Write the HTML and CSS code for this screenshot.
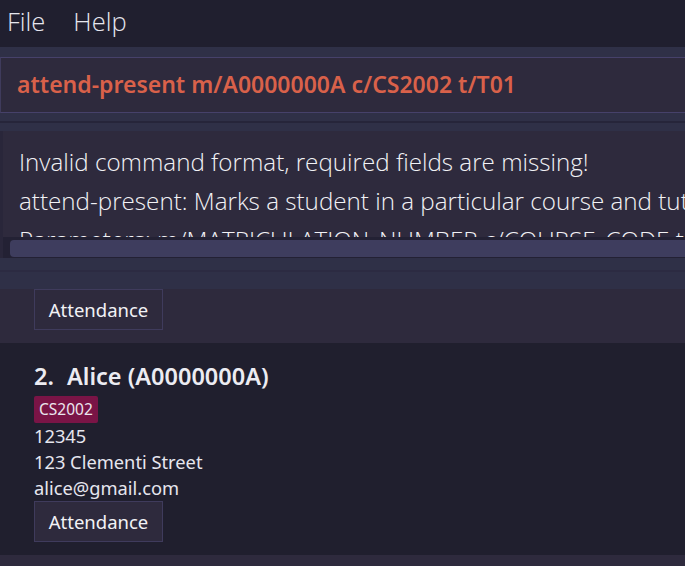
FILE: index.html
```html
<!DOCTYPE html>
<html>
<head>
<meta charset="utf-8">
<link rel="stylesheet" href="styles.css">
</head>
<body>
<div class="app">
  <div class="menubar">
    <span class="menu-item">File</span>
    <span class="menu-item">Help</span>
  </div>
  <div class="strip"></div>
  <div class="command-box">
    <div class="command-text">attend-present m/A0000000A c/CS2002 t/T01</div>
  </div>
  <div class="strip split"></div>
  <div class="result">
    <div class="result-text">
      <div class="line">Invalid command format, required fields are missing!</div>
      <div class="line">attend-present: Marks a student in a particular course and tutorial as present</div>
      <div class="line">Parameters: m/MATRICULATION_NUMBER c/COURSE_CODE t/TUTORIAL</div>
    </div>
    <div class="hscroll"><div class="thumb"></div></div>
  </div>
  <div class="strip list-top"></div>
  <div class="list">
    <div class="card card-alt partial">
      <div class="btn">Attendance</div>
    </div>
    <div class="card">
      <div class="name"><span class="index">2.</span>Alice (A0000000A)</div>
      <div class="tags"><span class="tag">CS2002</span></div>
      <div class="field">12345</div>
      <div class="field">123 Clementi Street</div>
      <div class="field">alice@gmail.com</div>
      <div class="btn">Attendance</div>
    </div>
    <div class="card card-alt rest"></div>
  </div>
</div>
</body>
</html>
```
FILE: styles.css
```css
html, body {
  margin: 0;
  padding: 0;
  background: #2e2a3d;
}
.app {
  width: 685px;
  height: 566px;
  overflow: hidden;
  display: flex;
  flex-direction: column;
  font-family: "Open Sans", "Noto Sans", sans-serif;
}
.menubar {
  height: 47px;
  background: #201f2f;
  display: flex;
  align-items: center;
  padding-left: 7px;
  gap: 28px;
  flex-shrink: 0;
}
.menu-item {
  color: #e6e6ee;
  font-size: 25.5px;
  font-weight: 300;
  line-height: 1;
  margin-top: -4px;
}
.strip {
  height: 10px;
  background: #2f3047;
  flex-shrink: 0;
}
.strip.split {
  height: 18px;
  background: linear-gradient(#2f3047 0 8px, #26253a 8px 10px, #2f3047 10px 18px);
}
.command-box {
  height: 54px;
  background: #2e2a3d;
  border-top: 1px solid #46416a;
  border-bottom: 1px solid #46416a;
  border-left: 1px solid #3f3b5c;
  display: flex;
  align-items: center;
  padding-left: 16px;
  flex-shrink: 0;
}
.command-text {
  color: #d9614a;
  font-size: 23px;
  font-weight: 600;
  font-family: "Noto Sans", "Open Sans", sans-serif;
  margin-top: -2px;
  white-space: nowrap;
}
.result {
  height: 127px;
  background: #2e2a3d;
  position: relative;
  overflow: hidden;
  flex-shrink: 0;
  border-left: 3px solid #29263a;
}
.result-text {
  padding: 11px 0 0 16px;
  color: #f2f2f6;
  font-size: 24.2px;
  font-weight: 300;
  white-space: nowrap;
}
.line {
  height: 39px;
  line-height: 39px;
}
.hscroll {
  position: absolute;
  left: 0;
  right: 0;
  top: 106px;
  height: 21px;
  background: #232134;
  padding: 3px 0 0 7px;
  box-sizing: border-box;
}
.thumb {
  height: 17px;
  background: #3e3d5e;
  border-radius: 4px 0 0 4px;
}
.strip.list-top {
  height: 32px;
  background: linear-gradient(#2f3047 0 12px, #2c2b42 12px 14px, #2f3047 14px 32px);
}
.list {
  flex: 1;
  display: flex;
  flex-direction: column;
  font-family: "Noto Sans", "Open Sans", sans-serif;
}
.card {
  background: #201f2e;
  padding: 18px 0 13px 34px;
  display: flex;
  flex-direction: column;
  align-items: flex-start;
}
.card-alt {
  background: #2e2a3d;
}
.card.partial {
  padding: 0 0 13px 34px;
  height: 54px;
  box-sizing: border-box;
  margin-top: -1px;
}
.card.rest {
  flex: 1;
  padding: 0;
}
.name {
  color: #ececf2;
  font-size: 23.5px;
  font-weight: 600;
  line-height: 31px;
  white-space: nowrap;
}
.index {
  margin-right: 13px;
}
.tags {
  margin-top: 4px;
  display: flex;
}
.tag {
  background: #7a1446;
  color: #eae6ee;
  font-size: 15.5px;
  line-height: 27px;
  padding: 0 5px;
  border-radius: 2px;
}
.field {
  color: #e6e6ee;
  font-size: 18.3px;
  line-height: 26px;
}
.btn {
  box-sizing: border-box;
  width: 129px;
  height: 41px;
  border: 1px solid #3f3b5c;
  background: #2e2a3d;
  color: #f2f2f6;
  font-size: 18.5px;
  display: flex;
  align-items: center;
  justify-content: center;
}
```
